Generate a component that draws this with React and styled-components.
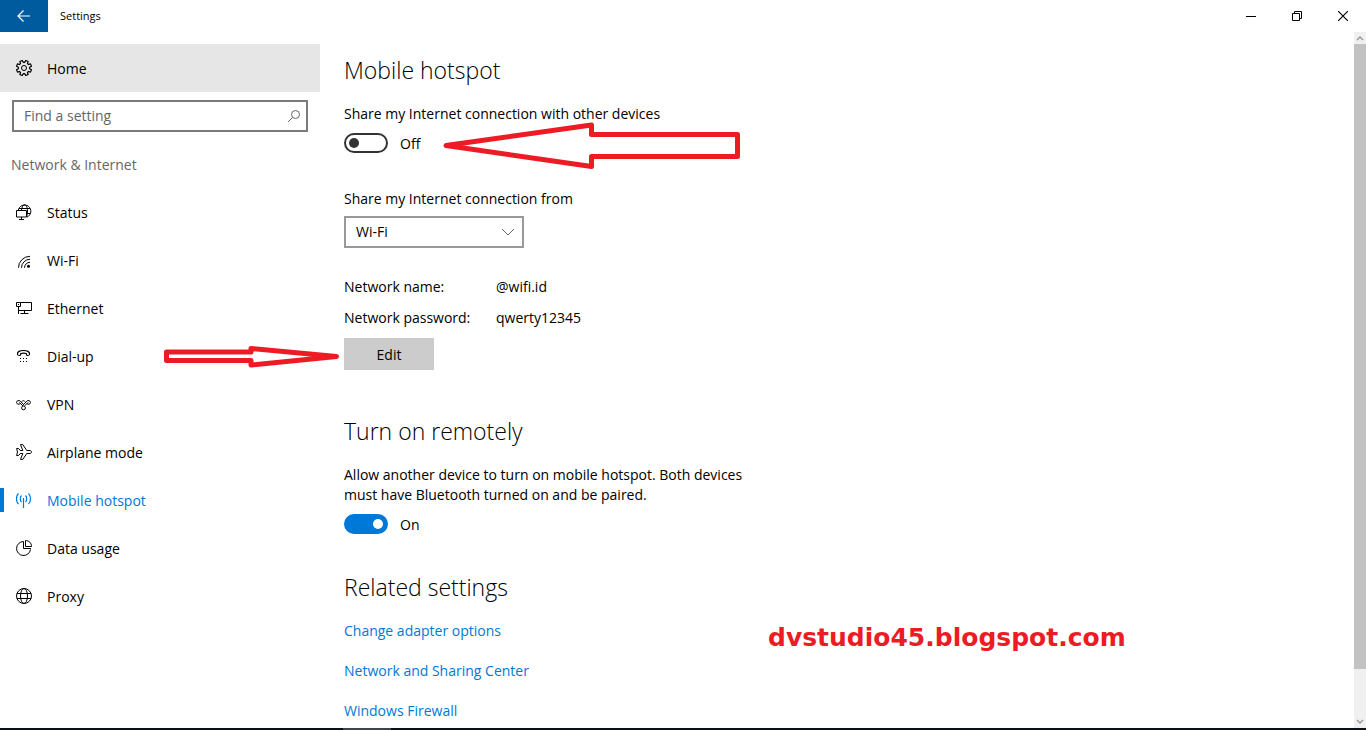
import React, { useState } from 'react';
import styled, { createGlobalStyle } from 'styled-components';

const GlobalStyle = createGlobalStyle`
  * {
    box-sizing: border-box;
  }
  body {
    margin: 0;
    background: #fff;
    color: #000;
    font-family: 'Open Sans', 'Noto Sans', sans-serif;
    font-size: 14px;
    line-height: 20px;
  }
  button, input, select {
    font: inherit;
    color: inherit;
  }
`

const Window = styled.div`
  position: relative;
  min-height: 100vh;
  display: flex;
  flex-direction: column;
`
const TitleBar = styled.header`
  height: 32px;
  display: flex;
  align-items: center;
`
const BackButton = styled.button`
  width: 48px;
  height: 32px;
  padding: 0;
  border: 0;
  background: #005a9e;
  color: #fff;
  display: flex;
  align-items: center;
  justify-content: center;
`
const WindowTitle = styled.span`
  flex: 1;
  padding-left: 12px;
  font-size: 11px;
`
const CaptionButton = styled.button`
  width: 46px;
  height: 32px;
  padding: 0;
  border: 0;
  background: transparent;
  display: flex;
  align-items: center;
  justify-content: center;
`
const Body = styled.div`
  flex: 1;
  display: flex;
`

const Sidebar = styled.nav`
  width: 320px;
  flex-shrink: 0;
  padding-top: 12px;
`
const NavLink = styled.a`
  height: 48px;
  padding-left: 16px;
  display: flex;
  align-items: center;
  gap: 15px;
  text-decoration: none;
  color: ${(props) => (props.$active ? '#0078d7' : '#000')};
  background: ${(props) => (props.$filled ? '#e6e6e6' : 'transparent')};
  &::before {
    content: '';
    width: 4px;
    height: 24px;
    margin-left: -16px;
    margin-right: -3px;
    background: ${(props) => (props.$active ? '#0078d7' : 'transparent')};
  }
`
const ItemText = styled.span`
  padding-top: 2px;
`
const SearchBox = styled.div`
  height: 32px;
  margin: 8px 12px 0;
  padding: 0 4px 0 10px;
  border: 2px solid #7a7a7a;
  display: flex;
  align-items: center;
`
const SearchInput = styled.input`
  flex: 1;
  min-width: 0;
  padding: 0;
  border: 0;
  outline: none;
  background: transparent;
  &::placeholder {
    color: #666;
    opacity: 1;
  }
`
const Category = styled.h2`
  height: 56px;
  margin: 0;
  padding: 9px 11px 0;
  font-size: 14px;
  font-weight: 400;
  line-height: 48px;
  color: #666;
`

const Main = styled.main`
  flex: 1;
  min-width: 0;
  padding: 22px 24px 0;
`
const Section = styled.section`
  max-width: 416px;
  margin-bottom: ${(props) => props.$gap || 0}px;
`
const Heading = styled.h1`
  margin: 0 0 18px;
  font-size: 23px;
  font-weight: 300;
  line-height: 32px;
`
const Text = styled.p`
  margin: 0;
`
const ToggleRow = styled.label`
  height: 20px;
  margin-top: 9px;
  display: flex;
  align-items: center;
  gap: 12px;
`
const ToggleInput = styled.input`
  appearance: none;
  width: 44px;
  height: 20px;
  margin: 0;
  padding: 0 3px;
  border: 2px solid #333;
  border-radius: 10px;
  display: flex;
  align-items: center;
  &::before {
    content: '';
    width: 10px;
    height: 10px;
    border-radius: 50%;
    background: #333;
  }
  &:checked {
    justify-content: flex-end;
    border-color: #0078d7;
    background: #0078d7;
  }
  &:checked::before {
    background: #fff;
  }
`
const FieldLabel = styled.label`
  display: block;
  margin-top: 36px;
`
const SelectBox = styled.div`
  position: relative;
  width: 180px;
  margin-top: 7px;
  svg {
    position: absolute;
    right: 9px;
    top: 11px;
    pointer-events: none;
  }
`
const Select = styled.select`
  appearance: none;
  width: 100%;
  height: 32px;
  padding: 0 10px;
  border: 2px solid #999;
  border-radius: 0;
  background: #fff;
`
const Details = styled.dl`
  margin: 29px 0 10px;
  display: grid;
  grid-template-columns: 152px 1fr;
  row-gap: 11px;
`
const Term = styled.dt`
  margin: 0;
`
const Value = styled.dd`
  margin: 0;
`
const EditButton = styled.button`
  width: 90px;
  height: 32px;
  padding: 2px 0 0;
  border: 0;
  background: #ccc;
`
const LinkList = styled.div`
  display: flex;
  flex-direction: column;
  align-items: flex-start;
  gap: 20px;
`
const RelatedLink = styled.a`
  color: #0078d7;
  text-decoration: none;
`

const ScrollBar = styled.div`
  width: 12px;
  flex-shrink: 0;
  display: flex;
  flex-direction: column;
  background: #f0f0f0;
`
const ScrollArrow = styled.div`
  height: 12px;
  display: flex;
  align-items: center;
  justify-content: center;
`
const ScrollTrack = styled.div`
  flex: 1;
  display: flex;
  flex-direction: column;
`
const ScrollThumb = styled.div`
  flex: 93;
  background: #c2c2c2;
`
const ScrollRest = styled.div`
  flex: 7;
`
const TaskbarEdge = styled.div`
  height: 2px;
  padding-left: 343px;
  background: #06121a;
  &::before {
    content: '';
    display: block;
    width: 48px;
    height: 2px;
    background: #3c4549;
  }
`

// hand-drawn notes lying over the window
const Arrow = styled.svg`
  position: absolute;
  left: ${(props) => props.$x}px;
  top: ${(props) => props.$y}px;
  pointer-events: none;
`
const Watermark = styled.div`
  position: absolute;
  left: 768px;
  top: 622px;
  font-family: 'DejaVu Sans', sans-serif;
  font-size: 25px;
  font-weight: 700;
  line-height: 32px;
  color: #ed1c24;
`

const Icon = ({ size = 16, children }) => (
  <svg width={size} height={size} viewBox={`0 0 ${size} ${size}`} fill="none" stroke="currentColor" strokeWidth="1" aria-hidden="true">
    {children}
  </svg>
)

// eight teeth round the hub
const gearPath = () => {
  const points = [];
  for (let i = 0; i < 8; i++) {
    [[-15, 5.7], [-10, 7.7], [10, 7.7], [15, 5.7]].forEach(([shift, r]) => {
      const a = ((i * 45 + 22.5 + shift) * Math.PI) / 180;
      points.push(`${(8 + r * Math.sin(a)).toFixed(2)} ${(8 - r * Math.cos(a)).toFixed(2)}`);
    });
  }
  return 'M' + points.join('L') + 'Z';
}

const GearIcon = () => (
  <Icon>
    <path d={gearPath()} strokeWidth="1.2" strokeLinejoin="round" />
    <circle cx="8" cy="8" r="2.5" />
  </Icon>
)
const StatusIcon = () => (
  <Icon>
    <path d="M2.3 6.5A6.3 6.3 0 1 1 11 13.1" />
    <path d="M5.500 6.500C5.800 3 7 .8 8.500 .8s3 2.700 3 6.200c0 2.500-.4 4.600-1 6M3 4.500h11M11 9.500h3.500" />
    <path d="M.5 6.500h10v6.500H.5zM5.500 13v2.500M3 15.500h5" />
  </Icon>
)
const WifiIcon = () => (
  <Icon>
    <path d="M2.500 15.800A11.500 11.500 0 0 1 14 4.300M5.500 15.800A8.500 8.500 0 0 1 14 7.300M8.500 15.800A5.500 5.500 0 0 1 14 10.300" />
    <circle cx="12.500" cy="14.300" r="1.500" fill="currentColor" stroke="none" />
  </Icon>
)
const EthernetIcon = () => (
  <Icon>
    <path d="M.5 2.500h4v4h-4zM2.500 6.500v7.500M4.500 2.500h11v8h-13M8.500 10.500v3M4.500 13.500h8" />
    <path d="M2 4.500h1" />
  </Icon>
)
const DialIcon = () => (
  <Icon>
    <path d="M1.500 6.500C1 3.500 4 2.500 7.500 2.500s6.500 1 6 4c-.2 1-.8 1-2 1-1 0-1.300-.4-1.300-2C8.500 5 6.500 5 4.800 5.500c0 1.600-.3 2-1.300 2-1.200 0-1.800 0-2-1z" strokeWidth="1.2" />
    <path d="M4 10.500h1M7 10.500h1M10 10.500h1M4 13.500h1M7 13.500h1M10 13.500h1" />
  </Icon>
)
const VpnIcon = () => (
  <Icon>
    <path d="M4.300 7.600C3 8.800.5 8.200.5 6.400S3 4 4.300 5.100L7.500 8.500" />
    <path d="M10.800 7.600c1.300 1.200 3.700.6 3.700-1.200S12 4 10.800 5.100L6.200 10" />
    <path d="M5.800 5.600C6.500 4.300 8.500 4.300 8.800 5.600M3.500 6.400L6.500 9.600M12 6.400L8.800 9.800" />
    <circle cx="7.500" cy="11.900" r="1.900" />
  </Icon>
)
const AirplaneIcon = () => (
  <Icon>
    <path d="M.6 4.500h2l1.600 2h2.600L4.500.6h2.300l4 5.900H14c2 .3 2 2.700 0 3h-3.200l-4 5.900H4.500l2.300-5.900H4.200l-1.600 2h-2L1.500 8z" strokeLinejoin="round" />
  </Icon>
)
const HotspotIcon = () => (
  <Icon>
    <path d="M7.500 6v10M5.500 3.500C3.900 5 3.900 8.500 5.500 10M9.500 3.500c1.600 1.500 1.600 5 0 6.500M2.500 1.500C-.2 4-.2 9.500 2.500 12M12.500 1.500c2.700 2.500 2.700 8 0 10.500" strokeWidth="1.200" />
  </Icon>
)
const PieIcon = () => (
  <Icon>
    <path d="M7.500 1.500A7 7 0 1 0 14.500 9.500" />
    <path d="M7.500 1.500v7h7.500M9.500.5v6h6C15.500 3 13 .5 9.500.5z" />
  </Icon>
)
const GlobeIcon = () => (
  <Icon>
    <circle cx="8" cy="8" r="7.500" />
    <ellipse cx="8" cy="8" rx="3.500" ry="7.500" />
    <path d="M1 5.500h14M1 10.500h14" />
  </Icon>
)

const navItems = [
  { name: 'Status', icon: StatusIcon },
  { name: 'Wi-Fi', icon: WifiIcon },
  { name: 'Ethernet', icon: EthernetIcon },
  { name: 'Dial-up', icon: DialIcon },
  { name: 'VPN', icon: VpnIcon },
  { name: 'Airplane mode', icon: AirplaneIcon },
  { name: 'Mobile hotspot', icon: HotspotIcon },
  { name: 'Data usage', icon: PieIcon },
  { name: 'Proxy', icon: GlobeIcon },
]

const relatedLinks = ['Change adapter options', 'Network and Sharing Center', 'Windows Firewall']

const Toggle = ({ initial, label }) => {
  const [on, setOn] = useState(initial);
  return (
    <ToggleRow>
      <ToggleInput type="checkbox" role="switch" aria-label={label} checked={on} onChange={() => setOn(!on)} />
      <ItemText>{on ? 'On' : 'Off'}</ItemText>
    </ToggleRow>
  )
}

const App = () => {
  const [active, setActive] = useState('Mobile hotspot');
  return (
    <Window>
      <GlobalStyle />
      <TitleBar>
        <BackButton aria-label="Back">
          <Icon><path d="M14 8H2.500M7.500 2.500L2 8l5.500 5.500" strokeWidth="1.200" /></Icon>
        </BackButton>
        <WindowTitle>Settings</WindowTitle>
        <CaptionButton aria-label="Minimize">
          <Icon size={10}><path d="M0 5.500h10" /></Icon>
        </CaptionButton>
        <CaptionButton aria-label="Restore">
          <Icon size={10}><path d="M.5 2.500h7v7h-7zM2.500 2.500v-2h7v7h-2" /></Icon>
        </CaptionButton>
        <CaptionButton aria-label="Close">
          <Icon size={10}><path d="M0 0l10 10M10 0L0 10" strokeWidth="1.200" /></Icon>
        </CaptionButton>
      </TitleBar>
      <Body>
        <Sidebar>
          <NavLink href="#home" $filled><GearIcon /><ItemText>Home</ItemText></NavLink>
          <SearchBox>
            <SearchInput type="text" placeholder="Find a setting" aria-label="Find a setting" />
            <Icon>
              <g stroke="#666">
                <circle cx="9.500" cy="6.500" r="4" />
                <path d="M6.500 9.500L2 14" />
              </g>
            </Icon>
          </SearchBox>
          <Category>Network &amp; Internet</Category>
          {navItems.map(({ name, icon: ItemIcon }) => (
            <NavLink key={name} href="#" $active={name === active} onClick={() => setActive(name)}>
              <ItemIcon /><ItemText>{name}</ItemText>
            </NavLink>
          ))}
        </Sidebar>
        <Main>
          <Section $gap={45}>
            <Heading>Mobile hotspot</Heading>
            <Text>Share my Internet connection with other devices</Text>
            <Toggle initial={false} label="Share my Internet connection" />
            <FieldLabel htmlFor="source">Share my Internet connection from</FieldLabel>
            <SelectBox>
              <Select id="source" defaultValue="Wi-Fi">
                <option>Wi-Fi</option>
                <option>Ethernet</option>
              </Select>
              <svg width="14" height="10" viewBox="0 0 14 10" fill="none" stroke="#666">
                <path d="M1 2l6 6 6-6" />
              </svg>
            </SelectBox>
            <Details>
              <Term>Network name:</Term>
              <Value>@wifi.id</Value>
              <Term>Network password:</Term>
              <Value>qwerty12345</Value>
            </Details>
            <EditButton>Edit</EditButton>
          </Section>
          <Section $gap={37}>
            <Heading as="h2">Turn on remotely</Heading>
            <Text>Allow another device to turn on mobile hotspot. Both devices must have Bluetooth turned on and be paired.</Text>
            <Toggle initial label="Turn on remotely" />
          </Section>
          <Section>
            <Heading as="h2">Related settings</Heading>
            <LinkList>
              {relatedLinks.map((link) => (
                <RelatedLink key={link} href="#">{link}</RelatedLink>
              ))}
            </LinkList>
          </Section>
        </Main>
        <ScrollBar>
          <ScrollArrow>
            <svg width="8" height="6" viewBox="0 0 8 6" fill="none" stroke="#999" strokeWidth="1.500"><path d="M1 5l3-3 3 3" /></svg>
          </ScrollArrow>
          <ScrollTrack>
            <ScrollThumb />
            <ScrollRest />
          </ScrollTrack>
          <ScrollArrow>
            <svg width="8" height="6" viewBox="0 0 8 6" fill="none" stroke="#999" strokeWidth="1.500"><path d="M1 1l3 3 3-3" /></svg>
          </ScrollArrow>
        </ScrollBar>
      </Body>
      <TaskbarEdge />
      <Arrow $x={440} $y={118} width="304" height="56" fill="none" stroke="#ed1c24" strokeWidth="5" strokeLinejoin="round">
        <path d="M6 27.500L151.500 7v9.500h146v22h-146V48.500z" />
      </Arrow>
      <Arrow $x={160} $y={340} width="184" height="32" fill="none" stroke="#ed1c24" strokeWidth="5" strokeLinejoin="round">
        <path d="M6.500 12H91V8.500L176.500 16.500 91 25v-4.500H6.500z" />
      </Arrow>
      <Watermark>dvstudio45.blogspot.com</Watermark>
    </Window>
  )
}

export default App;
